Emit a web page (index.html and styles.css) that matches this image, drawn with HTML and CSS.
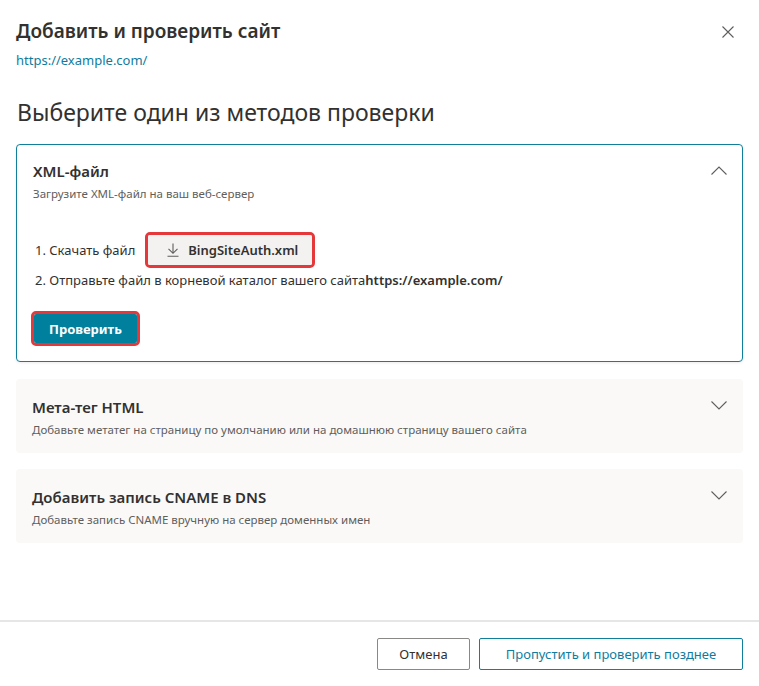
FILE: index.html
```html
<!DOCTYPE html>
<html lang="ru">
<head>
    <meta charset="UTF-8">
    <meta name="viewport" content="width=device-width, initial-scale=1.0">
    <title>Добавить и проверить сайт</title>
    <link rel="stylesheet" href="styles.css">
</head>
<body>
    <div class="dialog">
        <div class="dialog-body">
            <div class="dialog-head">
                <div>
                    <h1 class="dialog-title">Добавить и проверить сайт</h1>
                    <a class="site-url" href="#">https://example.com/</a>
                </div>
                <button class="close-btn" aria-label="Закрыть">
                    <svg width="12" height="12" viewBox="0 0 12 12"><path d="M0.5 0.5 L11.5 11.5 M11.5 0.5 L0.5 11.5" stroke="#605e5c" stroke-width="1.1" fill="none"/></svg>
                </button>
            </div>

            <h2 class="methods-title">Выберите один из методов проверки</h2>

            <div class="method open">
                <div class="method-head">
                    <div>
                        <div class="method-name">XML-файл</div>
                        <div class="method-desc">Загрузите XML-файл на ваш веб-сервер</div>
                    </div>
                    <svg class="chevron" width="16" height="9" viewBox="0 0 16 9"><path d="M0.5 8.5 L8 1 L15.5 8.5" stroke="#605e5c" stroke-width="1.1" fill="none"/></svg>
                </div>
                <div class="steps">
                    <div class="step">
                        1. Скачать файл
                        <span class="marked">
                            <button class="download-btn">
                                <svg width="12" height="14" viewBox="0 0 12 14"><path d="M6 0.5 V10 M1.5 5.8 L6 10.3 L10.5 5.8 M0.5 13.2 H11.5" stroke="#605e5c" stroke-width="1.1" fill="none"/></svg>
                                BingSiteAuth.xml
                            </button>
                        </span>
                    </div>
                    <div class="step">2. Отправьте файл в корневой каталог вашего сайта<b>https://example.com/</b></div>
                </div>
                <div class="verify-row">
                    <span class="marked">
                        <button class="primary-btn">Проверить</button>
                    </span>
                </div>
            </div>

            <div class="method">
                <div class="method-head">
                    <div>
                        <div class="method-name">Мета-тег HTML</div>
                        <div class="method-desc">Добавьте метатег на страницу по умолчанию или на домашнюю страницу вашего сайта</div>
                    </div>
                    <svg class="chevron" width="16" height="9" viewBox="0 0 16 9"><path d="M0.5 0.5 L8 8 L15.5 0.5" stroke="#605e5c" stroke-width="1.1" fill="none"/></svg>
                </div>
            </div>

            <div class="method">
                <div class="method-head">
                    <div>
                        <div class="method-name">Добавить запись CNAME в DNS</div>
                        <div class="method-desc">Добавьте запись CNAME вручную на сервер доменных имен</div>
                    </div>
                    <svg class="chevron" width="16" height="9" viewBox="0 0 16 9"><path d="M0.5 0.5 L8 8 L15.5 0.5" stroke="#605e5c" stroke-width="1.1" fill="none"/></svg>
                </div>
            </div>
        </div>

        <div class="dialog-footer">
            <button class="default-btn">Отмена</button>
            <button class="outline-btn">Пропустить и проверить позднее</button>
        </div>
    </div>
</body>
</html>
```

FILE: styles.css
```css
* {
    box-sizing: border-box;
}
body {
    margin: 0;
    font-family: "Noto Sans", "Open Sans", sans-serif;
    color: #323130;
    background-color: white;
}
button {
    font-family: inherit;
    cursor: pointer;
}
.dialog {
    width: 759px;
    height: 686px;
    display: flex;
    flex-direction: column;
}
.dialog-body {
    flex: 1;
    padding: 0 16px;
}
.dialog-head {
    display: flex;
    justify-content: space-between;
    align-items: flex-start;
    padding-top: 18px;
}
.dialog-title {
    margin: 0;
    font-size: 19px;
    font-weight: 600;
    line-height: 26px;
}
.site-url {
    display: block;
    margin-top: 7px;
    font-size: 13px;
    line-height: 18px;
    color: #0f7c9e;
    text-decoration: none;
}
.close-btn {
    border: none;
    background: none;
    padding: 0;
    margin: 8px 9px 0 0;
    line-height: 0;
}
.methods-title {
    margin: 27px 0 0;
    font-size: 23px;
    font-weight: 400;
    line-height: 32px;
    padding-left: 1px;
}
.method {
    background-color: #faf9f8;
    border-radius: 4px;
    padding: 18px 16px 16px 16px;
}
.method.open {
    margin-top: 16px;
    background-color: white;
    border: 1px solid #0f7f9c;
    box-shadow: 0 1px 3px rgba(0,0,0,0.08);
    padding: 16px 15px 15px 16px;
}
.method.open + .method {
    margin-top: 17px;
}
.method + .method + .method {
    margin-top: 16px;
}
.method-head {
    display: flex;
    justify-content: space-between;
    align-items: flex-start;
}
.chevron {
    margin: 4px 0 0 0;
}
.method.open .chevron {
    margin-top: 5px;
}
.method-name {
    font-size: 15px;
    font-weight: 600;
    line-height: 20px;
}
.method-desc {
    margin-top: 5px;
    font-size: 11.5px;
    line-height: 15px;
    color: #605e5c;
}
.steps {
    margin-top: 31px;
    padding-left: 2px;
}
.step {
    font-size: 13px;
    line-height: 18px;
    display: flex;
    align-items: center;
    gap: 10px;
}
.step + .step {
    margin-top: 3px;
    display: block;
}
.step b {
    font-weight: 600;
}
.marked {
    display: inline-block;
    border: 3px solid #e5383b;
    border-radius: 5px;
    line-height: 0;
}
.download-btn {
    display: inline-flex;
    align-items: center;
    gap: 9px;
    height: 30px;
    padding: 0 14px 0 19px;
    border: none;
    border-radius: 2px;
    background-color: #f3f2f1;
    color: #323130;
    font-size: 13px;
    font-weight: 600;
}
.verify-row {
    display: flex;
    margin-top: 22px;
    margin-left: -2px;
}
.primary-btn {
    height: 29px;
    padding: 0 15px;
    border: none;
    border-radius: 2px;
    background-color: #00809d;
    color: white;
    font-size: 13px;
    font-weight: 700;
}
.dialog-footer {
    border-top: 2px solid #e6e6e6;
    display: flex;
    justify-content: flex-end;
    gap: 9px;
    padding: 16px 16px 16px 0;
    height: 66px;
}
.default-btn,
.outline-btn {
    height: 32px;
    border-radius: 2px;
    background: white;
    font-size: 13px;
    font-weight: 400;
}
.default-btn {
    width: 93px;
    border: 1px solid #8a8886;
    color: #323130;
}
.outline-btn {
    width: 264px;
    border: 1px solid #0f7f9c;
    color: #0f7c9e;
}
```
